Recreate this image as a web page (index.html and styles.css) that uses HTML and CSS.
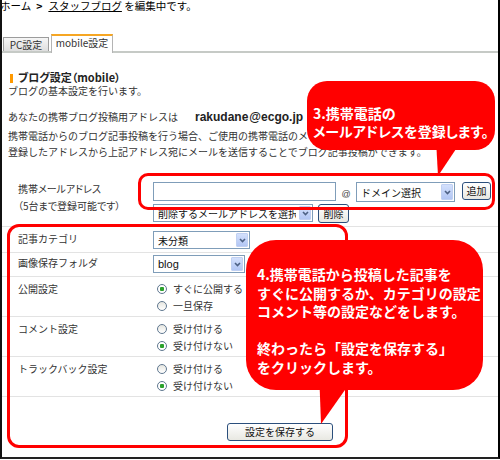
FILE: index.html
```html
<!DOCTYPE html>
<html lang="ja">

<head>
    <meta charset="UTF-8">
    <meta name="viewport" content="width=device-width, initial-scale=1.0">
    <title>ブログ設定（mobile）</title>
    <link rel="stylesheet" href="styles.css">
</head>

<body>
    <div class="frame">
        <p class="crumb">ホーム<b>&gt;</b><u>スタッフブログ</u> を編集中です。</p>

        <ul class="tabs">
            <li class="tab">PC設定</li>
            <li class="tab active">mobile設定</li>
        </ul>

        <div class="panel">
            <h2 class="title">ブログ設定（mobile）</h2>
            <p class="lead">ブログの基本設定を行います。</p>
            <p class="address">あなたの携帯ブログ投稿用アドレスは<b class="mail">rakudane</b><b class="mail domain-part">@ecgo.jp</b>で受け付けます。</p>
            <p class="note">携帯電話からのブログ記事投稿を行う場合、ご使用の携帯電話のメールアドレスを登録してください。<br>登録したアドレスから上記アドレス宛にメールを送信することでブログ記事投稿ができます。</p>

            <form class="form">
                <div class="row row-mail">
                    <div class="label">携帯メールアドレス<br>（5台まで登録可能です）</div>
                    <div class="value">
                        <div class="line">
                            <input class="text email" type="text">
                            <span class="at">@</span>
                            <span class="select domain">
                                <select><option>ドメイン選択</option></select>
                                <i class="arrow"><svg width="7" height="5" viewBox="0 0 7 5"><path d="M1 1l2.5 2.5L6 1" fill="none" stroke="#4d6185" stroke-width="1.6"/></svg></i>
                            </span>
                            <button class="btn add" type="button">追加</button>
                        </div>
                        <div class="line second">
                            <span class="select remove">
                                <select><option>削除するメールアドレスを選択</option></select>
                                <i class="arrow"><svg width="7" height="5" viewBox="0 0 7 5"><path d="M1 1l2.5 2.5L6 1" fill="none" stroke="#4d6185" stroke-width="1.6"/></svg></i>
                            </span>
                            <button class="btn del" type="button">削除</button>
                        </div>
                    </div>
                </div>

                <div class="row row-select first">
                    <div class="label">記事カテゴリ</div>
                    <div class="value">
                        <span class="select category">
                            <select><option>未分類</option></select>
                            <i class="arrow"><svg width="7" height="5" viewBox="0 0 7 5"><path d="M1 1l2.5 2.5L6 1" fill="none" stroke="#4d6185" stroke-width="1.6"/></svg></i>
                        </span>
                    </div>
                </div>

                <div class="row row-select">
                    <div class="label">画像保存フォルダ</div>
                    <div class="value">
                        <span class="select folder">
                            <select class="latin"><option>blog</option></select>
                            <i class="arrow"><svg width="7" height="5" viewBox="0 0 7 5"><path d="M1 1l2.5 2.5L6 1" fill="none" stroke="#4d6185" stroke-width="1.6"/></svg></i>
                        </span>
                    </div>
                </div>

                <div class="row row-radio">
                    <div class="label">公開設定</div>
                    <div class="value">
                        <label class="radio"><input type="radio" name="publish" checked>すぐに公開する</label>
                        <label class="radio"><input type="radio" name="publish">一旦保存</label>
                    </div>
                </div>

                <div class="row row-radio">
                    <div class="label">コメント設定</div>
                    <div class="value">
                        <label class="radio"><input type="radio" name="comment">受け付ける</label>
                        <label class="radio"><input type="radio" name="comment" checked>受け付けない</label>
                    </div>
                </div>

                <div class="row row-radio">
                    <div class="label">トラックバック設定</div>
                    <div class="value">
                        <label class="radio"><input type="radio" name="trackback">受け付ける</label>
                        <label class="radio"><input type="radio" name="trackback" checked>受け付けない</label>
                    </div>
                </div>

                <div class="actions">
                    <button class="btn save" type="button">設定を保存する</button>
                </div>
            </form>
        </div>

        <!-- annotations -->
        <div class="mark mark-mail"></div>
        <div class="mark mark-settings"></div>

        <svg class="tail tail-3" width="30" height="40" viewBox="0 0 30 40"><polygon points="0,0 26,0 2,36" fill="#ff0000"/></svg>
        <div class="bubble bubble-3">3.携帯電話の<br>メールアドレスを登録します。</div>

        <svg class="tail tail-4" width="45" height="55" viewBox="0 0 45 55"><polygon points="4,0 44,0 6,54" fill="#ff0000"/></svg>
        <div class="bubble bubble-4">4.携帯電話から投稿した記事を<br>すぐに公開するか、カテゴリの設定<br>コメント等の設定などをします。<br><br>終わったら「設定を保存する」<br>をクリックします。</div>
    </div>
</body>

</html>
```

FILE: styles.css
```css
* {
    box-sizing: border-box;
}
body {
    margin: 0;
    background: #fff;
    font-family: "Noto Sans CJK JP", sans-serif;
    font-size: 10px;
    color: #333;
}
p, h2, ul, form {
    margin: 0;
    padding: 0;
}
.frame {
    position: relative;
    width: 500px;
    height: 459px;
    border-left: 2px solid #111;
    border-right: 2px solid #000;
    border-bottom: 2px solid #222;
    overflow: hidden;
}
.crumb {
    margin: 0 0 0 -2px;
    font-size: 10.5px;
    line-height: 12px;
    color: #000;
}
.crumb b {
    margin: 0 6px 0 5px;
}
.crumb u {
    text-underline-offset: 1px;
}

/* tabs */
.tabs {
    list-style: none;
    display: flex;
    align-items: flex-end;
    height: 19px;
    margin-top: 22px;
    padding-left: 1px;
    border-bottom: 2px solid #c6cac6;
}
.tab {
    width: 46px;
    height: 14px;
    line-height: 13px;
    text-align: center;
    color: #333;
    background: linear-gradient(#f6f6f6, #dedede);
    border: 1px solid #9c9c9c;
    border-bottom: none;
}
.tab.active {
    width: 62px;
    height: 19px;
    line-height: 14px;
    margin: 0 0 -2px 2px;
    background: #fff;
    border: 1px solid #b4b4b4;
    border-top: 2px solid #f6a623;
    border-bottom: none;
}

/* intro */
.panel {
    padding-left: 6px;
}
.title {
    margin-top: 17px;
    font-size: 11px;
    line-height: 14px;
    color: #222;
    font-feature-settings: "palt";
}
.title:before {
    content: "";
    display: inline-block;
    width: 3px;
    height: 9px;
    margin: 0 5px 0 2px;
    background: #f90;
    vertical-align: -1px;
}
.lead {
    line-height: 14px;
}
.address {
    margin-top: 11px;
    line-height: 16px;
}
.mail {
    font-family: "Liberation Sans", Arial, sans-serif;
    font-size: 12px;
    color: #222;
    margin-left: 17px;
}
.mail.domain-part {
    margin: 0 13px 0 1px;
}
.note {
    margin-top: 3px;
    line-height: 15.5px;
    white-space: nowrap;
}

/* form table */
.form {
    margin: 16px 0 0 -6px;
}
.row {
    display: grid;
    grid-template-columns: 135px 1fr;
    padding-left: 16px;
    border-bottom: 1px solid #e3e3e3;
}
.label {
    line-height: 15px;
}
.row-mail {
    padding-top: 7px;
    padding-bottom: 3px;
}
.row-mail .label {
    margin-top: -2px;
    line-height: 17px;
    font-feature-settings: "palt";
}
.line {
    display: flex;
    align-items: flex-start;
}
.line.second {
    margin-top: 2px;
}
.row-select {
    padding-top: 2px;
    padding-bottom: 3px;
}
.row-select.first {
    padding-top: 4px;
}
.row-radio {
    padding-top: 3px;
    padding-bottom: 2px;
}
.row-radio .label {
    line-height: 17px;
}

/* controls */
.text {
    height: 19px;
    border: 1px solid #7f9db9;
    background: #fff;
    padding: 0 3px;
}
.email {
    width: 183px;
}
.at {
    width: 20px;
    padding-top: 7px;
    text-align: center;
    font-family: "Liberation Sans", Arial, sans-serif;
    font-size: 9px;
    line-height: 10px;
    color: #444;
}
.select {
    position: relative;
    display: inline-block;
    height: 18px;
}
.select select {
    appearance: none;
    width: 100%;
    height: 100%;
    margin: 0;
    padding: 0 16px 0 4px;
    border: 1px solid #7f9db9;
    border-radius: 0;
    background: #fff;
    font-family: "Noto Sans CJK JP", sans-serif;
    font-size: 10px;
    color: #111;
}
.select select.latin {
    font-family: "Liberation Sans", Arial, sans-serif;
    font-size: 11px;
}
.arrow {
    position: absolute;
    top: 2px;
    right: 2px;
    bottom: 2px;
    width: 12px;
    display: flex;
    align-items: center;
    justify-content: center;
    background: linear-gradient(#d3e0fc, #b2c6f4);
    border: 1px solid #c0d0f2;
    border-radius: 1px;
}
.domain {
    width: 99px;
    height: 20px;
    margin-right: 7px;
}
.remove {
    width: 160px;
}
.category {
    width: 97px;
}
.folder {
    width: 92px;
}
.btn {
    height: 18px;
    padding: 0;
    border: 1px solid #2b4f7c;
    border-radius: 3px;
    background: linear-gradient(#fff, #e8e8e2);
    font-family: "Noto Sans CJK JP", sans-serif;
    font-size: 10px;
    line-height: 16px;
    color: #111;
}
.add {
    width: 29px;
}
.del {
    width: 31px;
    height: 19px;
    margin-left: 5px;
}
.radio {
    display: flex;
    align-items: center;
    height: 17px;
    line-height: 17px;
}
.radio input {
    appearance: none;
    width: 10px;
    height: 10px;
    margin: 0 6px 0 4px;
    border: 1px solid #5f7790;
    border-radius: 50%;
    background: linear-gradient(#e6e6e0, #fff);
}
.radio input:checked {
    background: radial-gradient(circle, #2ca12c 0, #2ca12c 2px, #fff 2.5px);
}
.actions {
    padding: 26px 0 0 225px;
}
.save {
    width: 106px;
}

/* red annotations */
.mark {
    position: absolute;
    border: 3px solid #ff0000;
}
.mark-mail {
    left: 136px;
    top: 173px;
    width: 357px;
    height: 37px;
    border-radius: 10px;
}
.mark-settings {
    left: 5px;
    top: 224px;
    width: 341px;
    height: 224px;
    border-radius: 12px;
}
.bubble {
    position: absolute;
    background: #ff0000;
    color: #fff;
    font-size: 14px;
    font-weight: bold;
}
.bubble-3 {
    left: 305px;
    top: 81px;
    width: 188px;
    height: 69px;
    padding: 23px 0 0 6px;
    line-height: 18px;
    border-radius: 20px;
    font-feature-settings: "palt";
}
.bubble-4 {
    left: 244px;
    top: 240px;
    width: 237px;
    height: 150px;
    padding: 25px 0 0 11px;
    line-height: 18.5px;
    border-radius: 30px;
}
.tail {
    position: absolute;
}
.tail-3 {
    left: 434px;
    top: 140px;
}
.tail-4 {
    left: 313px;
    top: 370px;
}
```
